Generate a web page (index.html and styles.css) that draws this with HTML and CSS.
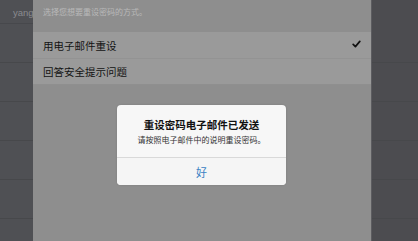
FILE: index.html
```html
<!DOCTYPE html>
<html lang="zh-CN">
<head>
    <meta charset="UTF-8">
    <meta name="viewport" content="width=device-width, initial-scale=1.0">
    <title>重设密码</title>
    <link rel="stylesheet" href="styles.css">
</head>
<body>

    <div class="screen">
        <div class="side-left">
            <div class="user">yang</div>
            <div class="side-row"></div>
            <div class="side-row"></div>
            <div class="side-row"></div>
            <div class="side-row"></div>
            <div class="side-row"></div>
        </div>

        <div class="panel">
            <p class="hint">选择您想要重设密码的方式。</p>
            <ul class="options">
                <li class="option">
                    <span>用电子邮件重设</span>
                    <svg class="check" width="9" height="8" viewBox="0 0 9 8">
                        <path d="M1.2 4.4 L3.4 6.6 L7.8 1.4" fill="none" stroke="#111" stroke-width="1.7" stroke-linecap="round" stroke-linejoin="round"/>
                    </svg>
                </li>
                <li class="option">
                    <span>回答安全提示问题</span>
                </li>
            </ul>
        </div>

        <div class="side-right">
            <div class="side-row"></div>
            <div class="side-row"></div>
            <div class="side-row"></div>
            <div class="side-row"></div>
            <div class="side-row"></div>
        </div>
    </div>

    <div class="alert">
        <div class="alert-body">
            <h2>重设密码电子邮件已发送</h2>
            <p>请按照电子邮件中的说明重设密码。</p>
        </div>
        <button class="alert-btn">好</button>
    </div>

</body>
</html>
```

FILE: styles.css
```css
* { margin: 0; padding: 0; box-sizing: border-box; font-family: "Liberation Sans", "Noto Sans CJK SC", sans-serif; }
body { width: 418px; height: 241px; overflow: hidden; background: #8e8e8e; position: relative; }
.screen { display: flex; height: 241px; }

.side-left { width: 33px; background: #4f5054; overflow: hidden; white-space: nowrap; }
.user { color: #8a8b8f; font-size: 9.5px; padding: 7px 0 0 13px; height: 24px; border-bottom: 1px solid #47484c; }
.side-right { width: 47px; background: #4c4c50; border-left: 1px solid #5c5c60; padding-top: 24px; }
.side-row { height: 39px; border-bottom: 1px solid #47484b; }

.panel { width: 338px; background: #8e8e8e; }
.hint { color: #b9b9b9; font-size: 8px; line-height: 10px; padding: 8px 0 0 10px; height: 32px; }
.options { list-style: none; }
.option { display: flex; align-items: center; justify-content: space-between; height: 27px; padding: 0 10px 0 10px; background: #9a9a9a; border-bottom: 1px solid #939393; color: #131313; font-size: 10.5px; }
.option:last-child { height: 26px; border-bottom-color: #8f8f8f; }
.check { margin-top: -2px; }

.alert { position: absolute; left: 117px; top: 105px; width: 169px; height: 80px; background: #f7f7f7; border-radius: 4px; box-shadow: 0 0 2px rgba(0, 0, 0, 0.15); overflow: hidden; }
.alert-body { height: 53px; text-align: center; padding-top: 13px; border-bottom: 1px solid #d9d9d9; }
.alert-body h2 { font-size: 10.5px; line-height: 14px; font-weight: bold; color: #111; }
.alert-body p { font-size: 8px; line-height: 11px; color: #333; margin-top: 3px; }
.alert-btn { display: block; width: 100%; height: 27px; border: none; background: #f5f5f5; color: #3b82c4; font-size: 11px; cursor: pointer; }
```
